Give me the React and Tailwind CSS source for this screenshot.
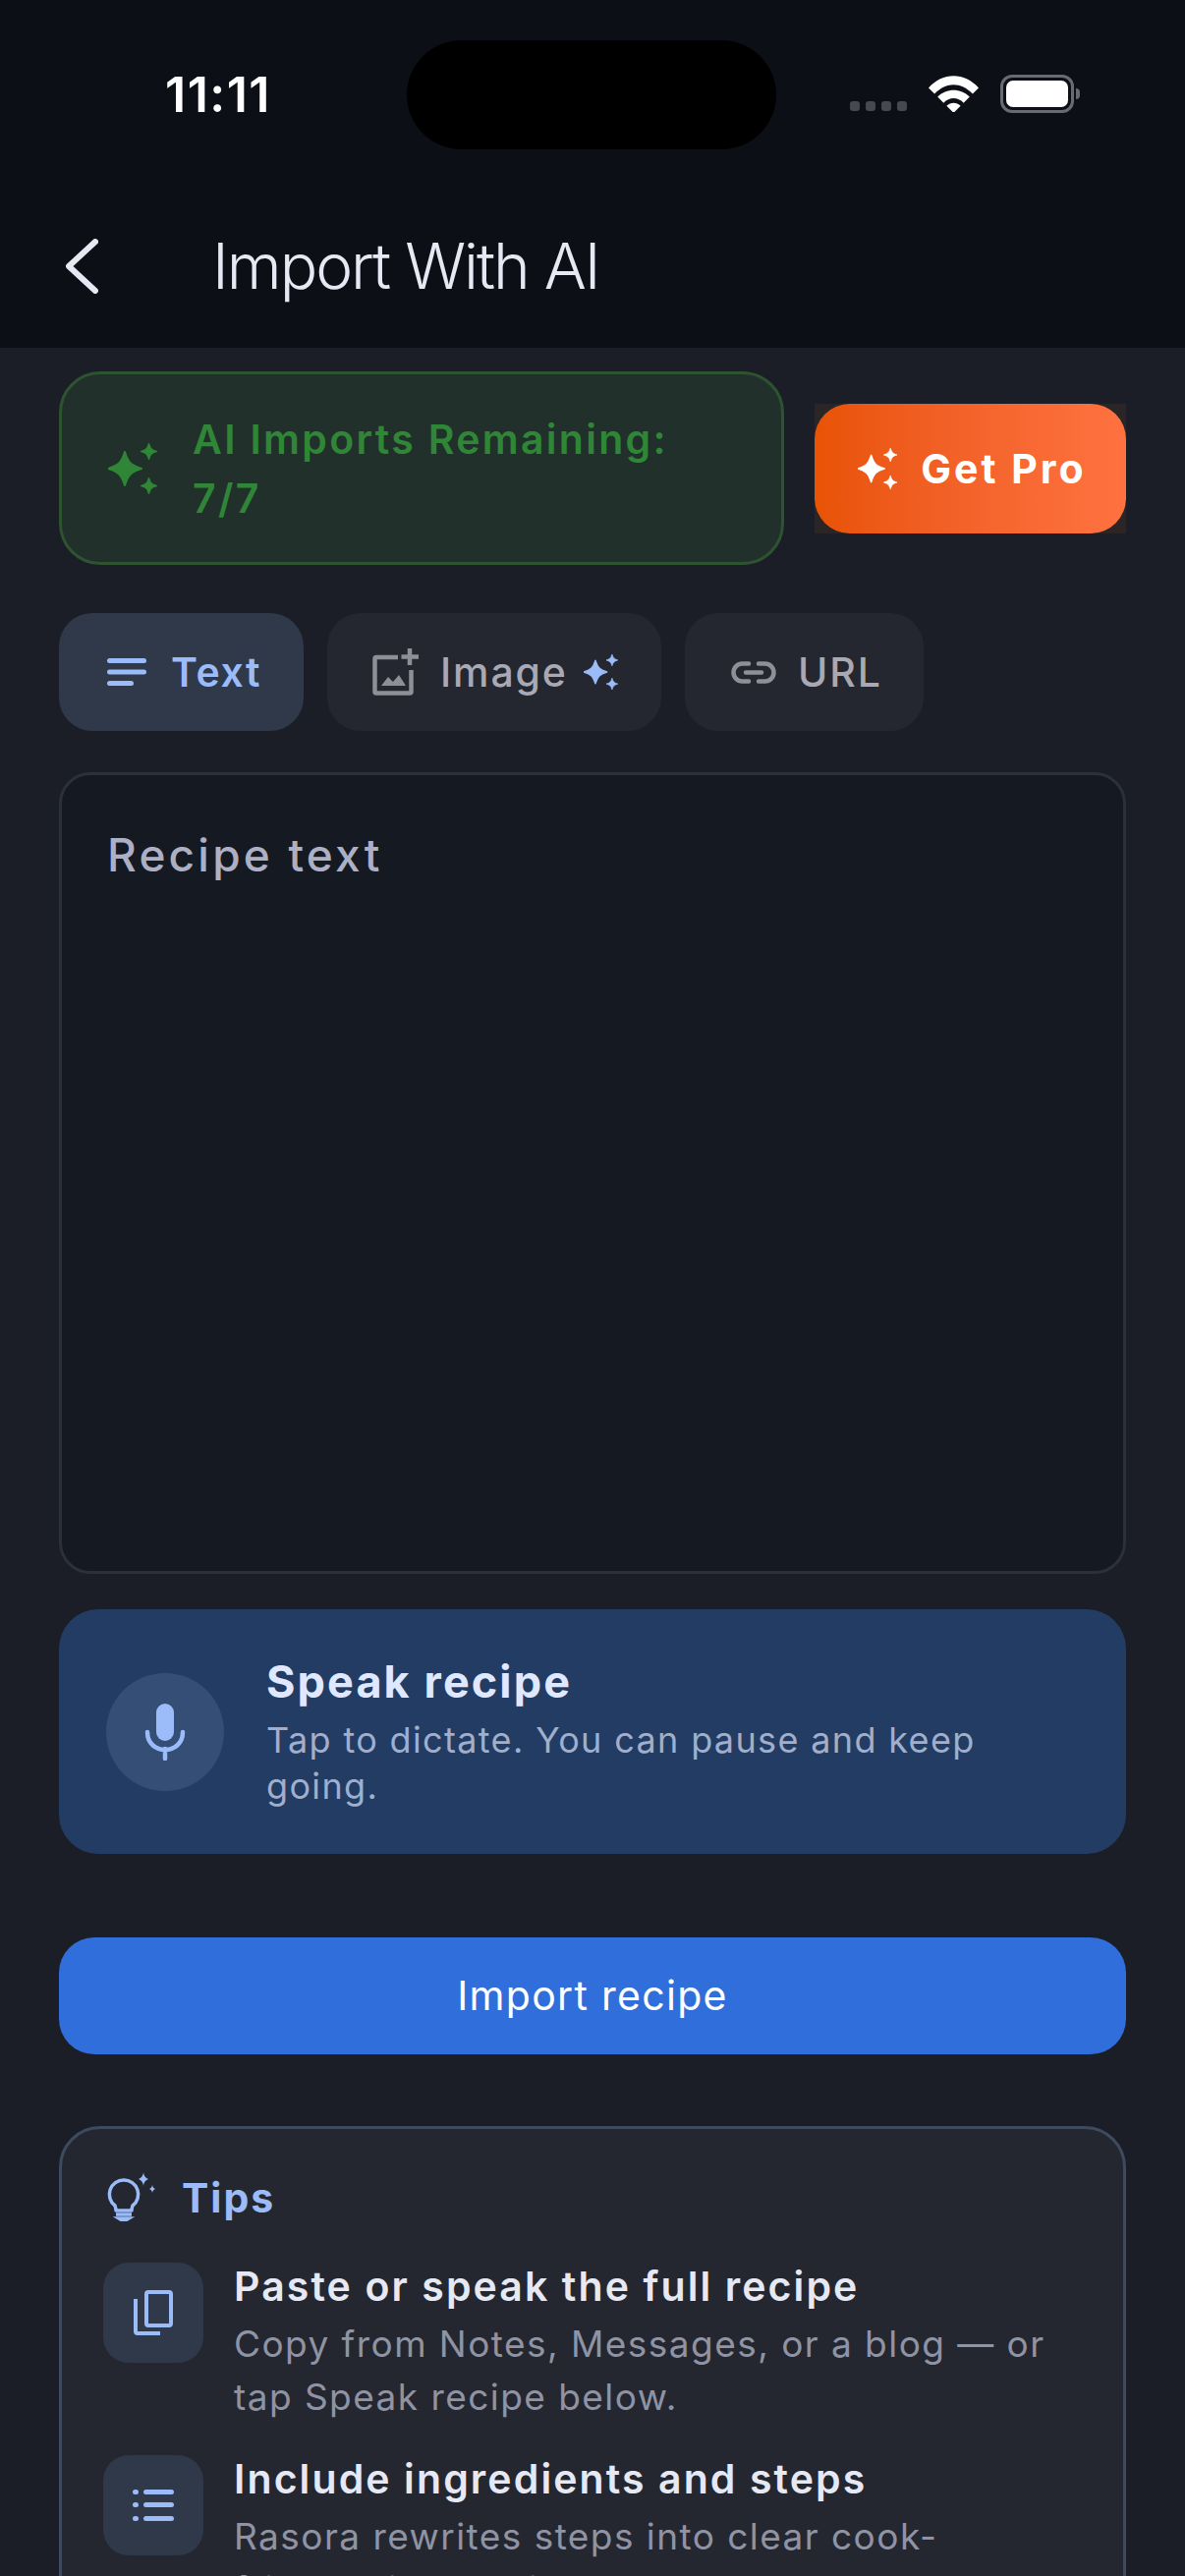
import React from "react";

const star = (cx, cy, r) => {
  const a = r * 0.2;
  const b = r * 0.36;
  return `M${cx} ${cy - r} C${cx + a} ${cy - b} ${cx + b} ${cy - a} ${cx + r} ${cy} C${cx + b} ${cy + a} ${cx + a} ${cy + b} ${cx} ${cy + r} C${cx - a} ${cy + b} ${cx - b} ${cy + a} ${cx - r} ${cy} C${cx - b} ${cy - a} ${cx - a} ${cy - b} ${cx} ${cy - r}Z`;
};

const Sparkles = ({ className }) => (
  <svg viewBox="0 0 50 52" className={className} fill="currentColor">
    <path d={star(17, 26, 17)} stroke="currentColor" strokeWidth="2" strokeLinejoin="round" />
    <path d={star(41.500, 8.500, 8.500)} stroke="currentColor" strokeWidth="1" strokeLinejoin="round" />
    <path d={star(41.500, 43.500, 8.500)} stroke="currentColor" strokeWidth="1" strokeLinejoin="round" />
  </svg>
);

const Wifi = () => (
  <svg viewBox="0 0 50 36" className="w-[51px] h-[37px]" fill="#fff">
    <path d="M0 12 C14 -4 36 -4 50 12 L44 18 C32 6 18 6 6 18Z" />
    <path d="M9 21 C18 12 32 12 41 21 L35 27 C29 21 21 21 15 27Z" />
    <path d="M18 30 C22 26 28 26 32 30 L25 37Z" />
  </svg>
);

const Tip = ({ icon, title, lines }) => (
  <div className="flex gap-[31px]">
    <div className="w-[102px] h-[102px] rounded-[26px] bg-[#2f3949] flex items-center justify-center shrink-0 text-[#9bbcf8]">
      {icon}
    </div>
    <div className="flex-1 -mt-[2px]">
      <div className="text-[41px] leading-[52px] font-semibold tracking-[2.1px] text-[#e6e9f3] whitespace-nowrap">{title}</div>
      <div className="mt-[6px]">
        {lines.map((l) => (
          <div key={l} className="text-[37px] leading-[54px] font-normal tracking-[1.45px] text-[#8f93a3] whitespace-nowrap">{l}</div>
        ))}
      </div>
    </div>
  </div>
);

export default function App() {
  return (
    <div className="w-[1206px] h-[2622px] overflow-hidden bg-[#1b1e26] font-['Inter',sans-serif]">
      <header className="h-[354px] bg-[#0c0f16]">
        <div className="flex items-center pt-[41px] h-[152px]">
          <div className="w-[414px] pl-[168px] text-[50px] font-semibold text-white tracking-[1.5px]">11:11</div>
          <div className="w-[376px] h-[111px] rounded-[56px] bg-black"></div>
          <div className="flex items-center">
            <div className="flex gap-[6px] ml-[75px] mt-[22px]">
              <span className="w-[10px] h-[10px] rounded-[3px] bg-[#48494e]"></span>
              <span className="w-[10px] h-[10px] rounded-[3px] bg-[#48494e]"></span>
              <span className="w-[10px] h-[10px] rounded-[3px] bg-[#48494e]"></span>
              <span className="w-[10px] h-[10px] rounded-[3px] bg-[#48494e]"></span>
            </div>
            <div className="ml-[22px] -mt-[2px]"><Wifi /></div>
            <div className="ml-[22px] -mt-[2px] flex items-center">
              <div className="w-[75px] h-[39px] rounded-[12px] border-[3px] border-[#6a6b70] p-[3px]">
                <div className="w-full h-full rounded-[7px] bg-white"></div>
              </div>
              <div className="w-[4px] h-[11px] rounded-r-[5px] bg-[#6a6b70] ml-[2px]"></div>
            </div>
          </div>
        </div>
        <div className="flex items-center mt-[84px] pl-[67px]">
          <svg viewBox="0 0 33 56" className="w-[33px] h-[56px]" fill="none" stroke="#e6e9f3" strokeWidth="6" strokeLinecap="round" strokeLinejoin="round">
            <path d="M30 3 L3 28 L30 53" />
          </svg>
          <div className="ml-[116px] text-[64px] font-light text-[#e6e9f3] tracking-[-2px] leading-[70px] whitespace-nowrap">Import With AI</div>
        </div>
      </header>

      <main className="px-[60px] pt-[24px]">
        <div className="flex items-center gap-[31px]">
          <div className="w-[738px] h-[197px] rounded-[42px] border-[3px] border-[#2d5331] bg-[#22302c] flex items-center pl-[47px]">
            <Sparkles className="w-[50px] h-[52px] text-[#2f8636] shrink-0" />
            <div className="ml-[36px] text-[41px] leading-[60px] font-semibold tracking-[2.3px] text-[#2f8636]">AI Imports Remaining:<br />7/7</div>
          </div>
          <div className="w-[317px] h-[132px] bg-[#2c2525]">
            <div className="w-full h-full rounded-[36px] bg-gradient-to-r from-[#e85304] to-[#ff7240] flex items-center justify-center gap-[24px] pl-[4px]">
              <Sparkles className="w-[40px] h-[42px] text-white shrink-0" />
              <span className="mt-[2px] text-[41px] font-bold tracking-[3px] text-white">Get Pro</span>
            </div>
          </div>
        </div>

        <div className="flex gap-[24px] mt-[49px]">
          <div className="w-[249px] h-[120px] rounded-[34px] bg-[#2f3949] flex items-center pl-[49px] text-[#9bbcf8]">
            <svg viewBox="0 0 40 28" className="w-[40px] h-[28px]" fill="currentColor">
              <rect x="0" y="0" width="40" height="5" rx="2.500" /><rect x="0" y="11.500" width="40" height="5" rx="2.500" /><rect x="0" y="23" width="27" height="5" rx="2.500" />
            </svg>
            <span className="ml-[25px] mt-[2px] text-[41px] font-semibold tracking-[1.6px]">Text</span>
          </div>
          <div className="w-[340px] h-[120px] rounded-[34px] bg-[#24272f] flex items-center pl-[46px] text-[#a8a9b4]">
            <svg viewBox="0 0 48 48" className="w-[48px] h-[48px] text-[#8e9097]" fill="none" stroke="currentColor" strokeWidth="4.500">
              <path d="M26 9 H4 a1.500 1.500 0 0 0 -1.500 1.500 V44 a1.500 1.500 0 0 0 1.500 1.500 H38 a1.500 1.500 0 0 0 1.500 -1.500 V22" />
              <path d="M38 0 V17 M29.500 8.500 H47" />
              <path d="M9 38 L16 29 L21 34 L27 27 L34 38Z" fill="currentColor" stroke="none" />
            </svg>
            <span className="ml-[21px] mt-[2px] text-[41px] font-medium tracking-[1.9px]">Image</span>
            <Sparkles className="ml-[16px] w-[35px] h-[36px] text-[#9bbcf8] shrink-0" />
          </div>
          <div className="w-[243px] h-[120px] rounded-[34px] bg-[#24272f] flex items-center pl-[47px] text-[#a8a9b4]">
            <svg viewBox="0 0 46 23" className="w-[46px] h-[23px] text-[#8e9097]" fill="none" stroke="currentColor" strokeWidth="4.500" strokeLinecap="round">
              <path d="M18 2.500 H11.500 a9 9 0 0 0 0 18 H18 M28 2.500 H34.500 a9 9 0 0 1 0 18 H28 M15 11.500 H31" />
            </svg>
            <span className="ml-[22px] mt-[2px] text-[41px] font-medium tracking-[1.9px]">URL</span>
          </div>
        </div>

        <div className="mt-[42px] h-[816px] rounded-[32px] border-[3px] border-[#2c303a] bg-[#151922] px-[46px] pt-[53px] text-[46px] leading-[56px] font-medium tracking-[3.2px] text-[#adb0c4]">
          Recipe text
        </div>

        <div className="mt-[36px] h-[249px] rounded-[40px] bg-[#233c64] flex items-center pl-[48px]">
          <div className="w-[120px] h-[120px] rounded-full bg-[#354e75] flex items-center justify-center text-[#9bbcf8] shrink-0">
            <svg viewBox="0 0 42 58" className="w-[42px] h-[58px]" fill="none" stroke="currentColor" strokeWidth="4.500" strokeLinecap="round">
              <rect x="12" y="0" width="18" height="38" rx="9" fill="currentColor" stroke="none" />
              <path d="M3 29 C3 53 39 53 39 29 M21 46 V56" />
            </svg>
          </div>
          <div className="ml-[43px]">
            <div className="text-[45px] leading-[56px] font-bold tracking-[2.1px] text-[#dfe8ff]">Speak recipe</div>
            <div className="mt-[8px] text-[36px] leading-[47px] tracking-[1.35px] text-[#9fafcc] w-[800px]">Tap to dictate. You can pause and keep<br />going.</div>
          </div>
        </div>

        <div className="mt-[85px] h-[119px] rounded-[36px] bg-[#2f6edb] flex items-center justify-center text-[41px] font-normal tracking-[1.3px] text-white">
          Import recipe
        </div>

        <div className="mt-[73px] h-[600px] rounded-[42px] border-[3px] border-[#3d4a60] bg-[#242730] pl-[42px] pr-[40px] pt-[45px]">
          <div className="flex items-center h-[48px] text-[#9bbcf8]">
            <svg viewBox="0 0 52 50" className="ml-[3px] w-[52px] h-[50px]" fill="none" stroke="currentColor" strokeWidth="3.500">
              <path d="M18 8 a14.500 14.500 0 0 0 -9 26 q1 3 1 5 H26 q0 -2 1 -5 a14.500 14.500 0 0 0 -9 -26Z" strokeLinejoin="round" />
              <path d="M10 43 H26" />
              <path d="M13 47 L18 50 L23 47Z" fill="currentColor" />
              <path d="M38 0 C38.500 4 40 5.500 43 7 C40 8.500 38.500 10 38 14 C37.500 10 36 8.500 33 7 C36 5.500 37.500 4 38 0Z M47 13 C47.300 15 48 16 50 17 C48 18 47.300 19 47 21 C46.700 19 46 18 44 17 C46 16 46.700 15 47 13Z" fill="currentColor" stroke="none" />
            </svg>
            <span className="ml-[25px] mt-[2px] text-[41px] leading-[60px] font-bold tracking-[2px]">Tips</span>
          </div>
          <div className="mt-[43px] flex flex-col gap-[32px]">
            <Tip
              title="Paste or speak the full recipe"
              lines={["Copy from Notes, Messages, or a blog — or", "tap Speak recipe below."]}
              icon={
                <svg viewBox="0 0 40 46" className="w-[40px] h-[46px]" fill="none" stroke="currentColor" strokeWidth="4">
                  <rect x="13" y="2" width="25" height="34" rx="2" />
                  <path d="M2 9 V42 a2 2 0 0 0 2 2 H27" />
                </svg>
              }
            />
            <Tip
              title="Include ingredients and steps"
              lines={["Rasora rewrites steps into clear cook-", "friendly instructions."]}
              icon={
                <svg viewBox="0 0 42 34" className="w-[42px] h-[34px]" fill="currentColor">
                  <rect x="0" y="1" width="6" height="5" rx="2.500" /><rect x="11" y="1" width="31" height="5" rx="2.500" />
                  <rect x="0" y="14" width="6" height="5" rx="2.500" /><rect x="11" y="14" width="31" height="5" rx="2.500" />
                  <rect x="0" y="28" width="6" height="5" rx="2.500" /><rect x="11" y="28" width="31" height="5" rx="2.500" />
                </svg>
              }
            />
          </div>
        </div>
      </main>
    </div>
  );
}
